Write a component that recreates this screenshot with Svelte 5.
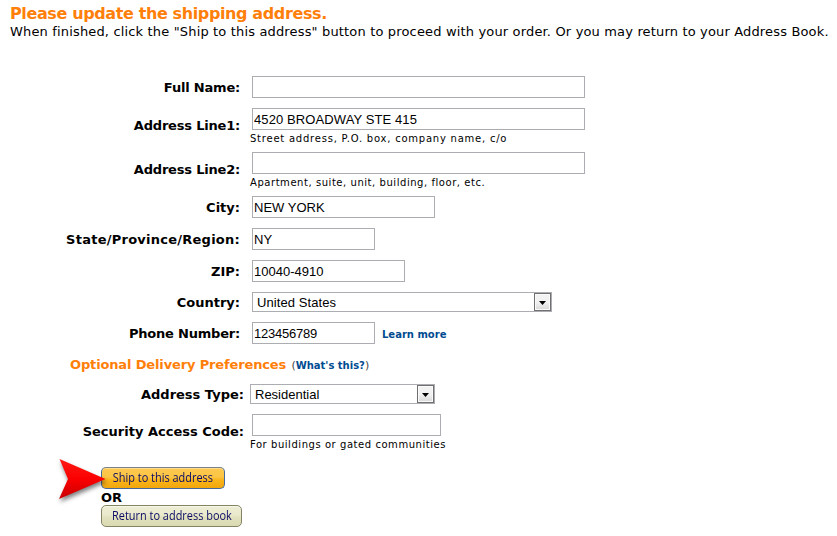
<script>
  let rows = [
    { id: 'name', label: 'Full Name:', value: '' },
    { id: 'line1', label: 'Address Line1:', value: '4520 BROADWAY STE 415', hint: 'Street address, P.O. box, company name, c/o' },
    { id: 'line2', label: 'Address Line2:', value: '', hint: 'Apartment, suite, unit, building, floor, etc.' },
    { id: 'city', label: 'City:', value: 'NEW YORK' },
    { id: 'state', label: 'State/Province/Region:', value: 'NY' },
    { id: 'zip', label: 'ZIP:', value: '10040-4910' }
  ];
  let phone = '123456789';
  let code = '';
</script>

<main>
  <h1>Please update the shipping address.</h1>
  <p class="intro">When finished, click the "Ship to this address" button to proceed with your order. Or you may return to your Address Book.</p>

  <form on:submit|preventDefault>
    {#each rows as row}
      <div class="row {row.id}" class:tall={row.hint}>
        <label for={row.id}>{row.label}</label>
        <div class="field">
          <input id={row.id} bind:value={row.value} />
          {#if row.hint}<span class="hint">{row.hint}</span>{/if}
        </div>
      </div>
    {/each}
    <div class="row country">
      <label for="country">Country:</label>
      <button type="button" id="country" class="select">
        <span>United States</span>
        <span class="arrow"><svg width="7" height="4" viewBox="0 0 7 4"><path d="M0 0h7L3.5 4z" /></svg></span>
      </button>
    </div>
    <div class="row phone">
      <label for="phone">Phone Number:</label>
      <input id="phone" bind:value={phone} />
      <a class="link" href="#more">Learn more</a>
    </div>

    <h2>Optional Delivery Preferences <small>(<a class="link" href="#what">What's this?</a>)</small></h2>

    <div class="row type">
      <label for="type">Address Type:</label>
      <button type="button" id="type" class="select">
        <span>Residential</span>
        <span class="arrow"><svg width="7" height="4" viewBox="0 0 7 4"><path d="M0 0h7L3.5 4z" /></svg></span>
      </button>
    </div>
    <div class="row tall security">
      <label for="code">Security Access Code:</label>
      <div class="field">
        <input id="code" bind:value={code} />
        <span class="hint">For buildings or gated communities</span>
      </div>
    </div>

    <div class="actions">
      <button class="btn ship"><span>Ship to this address</span></button>
      <div class="or">OR</div>
      <button type="button" class="btn back"><span>Return to address book</span></button>
      <svg class="pointer" width="60" height="52" viewBox="0 0 60 52">
        <defs>
          <linearGradient id="red" x1="0" y1="0" x2="0" y2="1">
            <stop offset="0" stop-color="#ff1a14" />
            <stop offset="0.5" stop-color="#fb0000" />
            <stop offset="1" stop-color="#c80000" />
          </linearGradient>
        </defs>
        <path d="M3.5 3L49.500 23L3 43L12 23z" fill="url(#red)" />
      </svg>
    </div>
  </form>
</main>

<style>
  :global(body) {
    background: #fff;
  }

  main {
    box-sizing: border-box;
    width: 837px;
    height: 536px;
    padding-top: 4px;
    overflow: hidden;
    color: #000;
    font-family: Verdana, "DejaVu Sans", sans-serif;
    font-size: 13px;
  }

  h1 {
    margin: 0 0 0 10px;
    color: #ff7f0a;
    font-size: 16px;
    letter-spacing: -0.38px;
    line-height: 20px;
    white-space: nowrap;
  }

  .intro {
    margin: 0 0 0 10px;
    letter-spacing: 0.16px;
    line-height: 16px;
    white-space: nowrap;
  }

  form {
    padding-top: 36px;
  }

  .row {
    display: flex;
    align-items: flex-start;
    height: 32px;
  }

  label {
    width: 240px;
    margin-right: 12px;
    font-weight: bold;
    line-height: 24px;
    text-align: right;
    white-space: nowrap;
  }

  .name label,
  .line1 label,
  .line2 label,
  .phone label {
    letter-spacing: -0.2px;
  }

  .state label {
    letter-spacing: 0.25px;
  }

  .tall {
    height: 44px;
  }

  .tall label {
    padding-top: 6px;
  }

  .field {
    display: flex;
    flex-direction: column;
  }

  input {
    box-sizing: border-box;
    width: 333px;
    height: 22px;
    padding: 0 1px;
    border: 1px solid #abadb3;
    font: 13px Arial, "Liberation Sans", sans-serif;
  }

  #line1 {
    letter-spacing: 0.1px;
  }

  #city {
    width: 183px;
  }

  #state {
    width: 123px;
  }

  #zip {
    width: 153px;
  }

  #phone {
    width: 123px;
    letter-spacing: -0.23px;
  }

  #code {
    width: 189px;
  }

  .hint {
    margin-left: -2px;
    font-size: 10px;
    letter-spacing: 0.55px;
    line-height: 18px;
    white-space: nowrap;
  }

  .line1 .hint {
    letter-spacing: 0.77px;
  }

  .select {
    display: flex;
    justify-content: space-between;
    align-items: center;
    box-sizing: border-box;
    width: 300px;
    height: 20px;
    padding: 0 0 0 4px;
    border: 1px solid #abadb3;
    background: #fff;
    color: #000;
    font: 13px Arial, "Liberation Sans", sans-serif;
  }

  #country {
    letter-spacing: 0.08px;
  }

  .arrow {
    display: flex;
    justify-content: center;
    align-items: center;
    box-sizing: border-box;
    width: 17px;
    height: 18px;
    padding-top: 2px;
    border: 1px solid #707070;
    background: linear-gradient(#f2f2f2 50%, #d8d8d8);
    box-shadow: inset 0 0 0 1px #fafafa;
  }

  .country {
    height: 30px;
  }

  .country label {
    line-height: 22px;
  }

  .phone {
    height: 34px;
  }

  .link {
    color: #004b91;
    font-size: 10px;
    font-weight: bold;
    letter-spacing: 0;
    text-decoration: none;
  }

  .phone .link {
    margin-left: 7px;
    line-height: 25px;
  }

  h2 {
    height: 28px;
    margin: 0 0 0 70px;
    color: #ff7f0a;
    font-size: 13px;
    letter-spacing: -0.14px;
    line-height: 17px;
  }

  small {
    margin-left: 1px;
    color: #444;
    font-size: 11px;
    font-weight: normal;
  }

  .type {
    height: 30px;
  }

  .type label,
  .security label {
    width: 244px;
    margin-right: 6px;
  }

  .type label {
    line-height: 22px;
  }

  .type .select {
    width: 185px;
  }

  .security {
    height: 53px;
  }

  .security label {
    margin-right: 8px;
  }

  .actions {
    position: relative;
    padding-left: 101px;
  }

  .btn {
    display: flex;
    justify-content: center;
    box-sizing: border-box;
    width: 124px;
    height: 22px;
    padding: 0;
    border: 1px solid #46699a;
    border-top-color: #7d8288;
    border-radius: 5px;
    background: linear-gradient(#fdc94f, #fdc545 45%, #f9b41a 60%, #f2a70c);
    box-shadow: inset 0 1px 0 #fddc8e;
    color: #0b0b66;
    font: 13.5px/19px "Open Sans", sans-serif;
    white-space: nowrap;
  }

  /* condensed button lettering */
  .btn span {
    flex: none;
    transform: scaleX(0.81);
  }

  .or {
    height: 16px;
    font-weight: bold;
    line-height: 17px;
  }

  .back {
    width: 141px;
    border-color: #848464;
    background: linear-gradient(#eeeed6, #e9e9cc 45%, #e0e0bc 60%, #dadab2);
    box-shadow: inset 0 1px 0 #f7f7e8;
  }

  .pointer {
    position: absolute;
    left: 56px;
    top: -11px;
    filter: drop-shadow(1px 3px 2px rgba(0, 0, 0, 0.5));
  }
</style>
